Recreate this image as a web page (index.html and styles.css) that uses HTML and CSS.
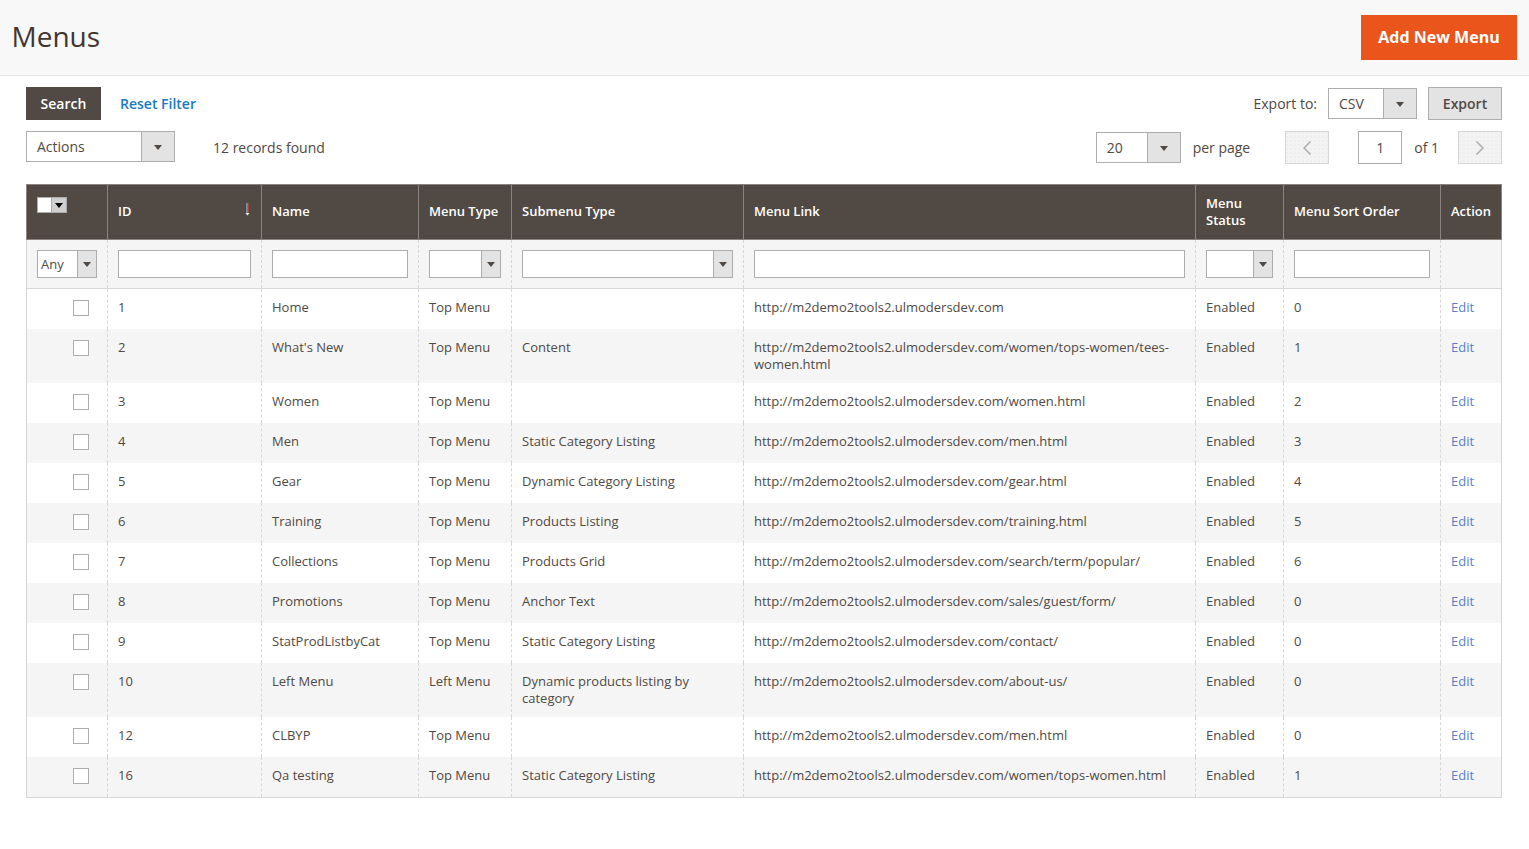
FILE: index.html
```html
<!DOCTYPE html>
<html lang="en">
<head>
<meta charset="utf-8">
<title>Menus</title>
<link rel="stylesheet" href="styles.css">
</head>
<body>
<header class="page-head">
  <h1 class="page-title">Menus</h1>
  <button class="btn-primary">Add New Menu</button>
</header>
<main class="content">
  <div class="bar bar-top">
    <button class="btn-search">Search</button>
    <a class="reset" href="#">Reset Filter</a>
    <span class="spacer"></span>
    <span class="label export-label">Export to:</span>
    <div class="sel sel-csv"><span class="val">CSV</span><span class="arr"><i></i></span></div>
    <button class="btn-export">Export</button>
  </div>
  <div class="bar bar-second">
    <div class="sel sel-actions"><span class="val">Actions</span><span class="arr"><i></i></span></div>
    <span class="label records">12 records found</span>
    <span class="spacer"></span>
    <div class="sel sel-page"><span class="val">20</span><span class="arr"><i></i></span></div>
    <span class="label perpage">per page</span>
    <button class="pager pager-prev" aria-label="Previous"><svg width="10" height="16" viewBox="0 0 10 16"><path d="M8.5 1.5 2 8l6.5 6.5" fill="none" stroke="#adadad" stroke-width="1.5"/></svg></button>
    <input class="page-input" value="1">
    <span class="label of">of 1</span>
    <button class="pager pager-next" aria-label="Next"><svg width="10" height="16" viewBox="0 0 10 16"><path d="M1.5 1.5 8 8l-6.5 6.5" fill="none" stroke="#adadad" stroke-width="1.5"/></svg></button>
  </div>
  <table class="grid">
    <colgroup>
      <col class="c1"><col class="c2"><col class="c3"><col class="c4"><col class="c5"><col class="c6"><col class="c7"><col class="c8"><col class="c9">
    </colgroup>
    <thead>
      <tr class="head">
        <th class="th-check"><span class="mass"><span class="mass-box"></span><span class="mass-arr"><i></i></span></span></th>
        <th class="th-id">ID<svg class="sort" width="7" height="13" viewBox="0 0 7 13"><path d="M3 0v11" stroke="#a9cdf0" stroke-width="1"/><path d="M4 0v11" stroke="#e8483f" stroke-width="1"/><path d="M1.5 10h4L3.5 12.5z" fill="#f4f4f4"/></svg></th>
        <th>Name</th>
        <th>Menu Type</th>
        <th>Submenu Type</th>
        <th>Menu Link</th>
        <th>Menu Status</th>
        <th>Menu Sort Order</th>
        <th>Action</th>
      </tr>
      <tr class="filters">
        <td><div class="sel sel-f sel-any"><span class="val">Any</span><span class="arr"><i></i></span></div></td>
        <td><input class="f-input"></td>
        <td><input class="f-input"></td>
        <td><div class="sel sel-f"><span class="val"></span><span class="arr"><i></i></span></div></td>
        <td><div class="sel sel-f"><span class="val"></span><span class="arr"><i></i></span></div></td>
        <td><input class="f-input"></td>
        <td><div class="sel sel-f"><span class="val"></span><span class="arr"><i></i></span></div></td>
        <td><input class="f-input"></td>
        <td></td>
      </tr>
    </thead>
    <tbody>
      <tr><td class="td-check"><span class="cb"></span></td><td>1</td><td>Home</td><td>Top Menu</td><td></td><td>http://m2demo2tools2.ulmodersdev.com</td><td>Enabled</td><td>0</td><td><a href="#">Edit</a></td></tr>
      <tr><td class="td-check"><span class="cb"></span></td><td>2</td><td>What's New</td><td>Top Menu</td><td>Content</td><td>http://m2demo2tools2.ulmodersdev.com/women/tops-women/tees-women.html</td><td>Enabled</td><td>1</td><td><a href="#">Edit</a></td></tr>
      <tr><td class="td-check"><span class="cb"></span></td><td>3</td><td>Women</td><td>Top Menu</td><td></td><td>http://m2demo2tools2.ulmodersdev.com/women.html</td><td>Enabled</td><td>2</td><td><a href="#">Edit</a></td></tr>
      <tr><td class="td-check"><span class="cb"></span></td><td>4</td><td>Men</td><td>Top Menu</td><td>Static Category Listing</td><td>http://m2demo2tools2.ulmodersdev.com/men.html</td><td>Enabled</td><td>3</td><td><a href="#">Edit</a></td></tr>
      <tr><td class="td-check"><span class="cb"></span></td><td>5</td><td>Gear</td><td>Top Menu</td><td>Dynamic Category Listing</td><td>http://m2demo2tools2.ulmodersdev.com/gear.html</td><td>Enabled</td><td>4</td><td><a href="#">Edit</a></td></tr>
      <tr><td class="td-check"><span class="cb"></span></td><td>6</td><td>Training</td><td>Top Menu</td><td>Products Listing</td><td>http://m2demo2tools2.ulmodersdev.com/training.html</td><td>Enabled</td><td>5</td><td><a href="#">Edit</a></td></tr>
      <tr><td class="td-check"><span class="cb"></span></td><td>7</td><td>Collections</td><td>Top Menu</td><td>Products Grid</td><td>http://m2demo2tools2.ulmodersdev.com/search/term/popular/</td><td>Enabled</td><td>6</td><td><a href="#">Edit</a></td></tr>
      <tr><td class="td-check"><span class="cb"></span></td><td>8</td><td>Promotions</td><td>Top Menu</td><td>Anchor Text</td><td>http://m2demo2tools2.ulmodersdev.com/sales/guest/form/</td><td>Enabled</td><td>0</td><td><a href="#">Edit</a></td></tr>
      <tr><td class="td-check"><span class="cb"></span></td><td>9</td><td>StatProdListbyCat</td><td>Top Menu</td><td>Static Category Listing</td><td>http://m2demo2tools2.ulmodersdev.com/contact/</td><td>Enabled</td><td>0</td><td><a href="#">Edit</a></td></tr>
      <tr><td class="td-check"><span class="cb"></span></td><td>10</td><td>Left Menu</td><td>Left Menu</td><td>Dynamic products listing by category</td><td>http://m2demo2tools2.ulmodersdev.com/about-us/</td><td>Enabled</td><td>0</td><td><a href="#">Edit</a></td></tr>
      <tr><td class="td-check"><span class="cb"></span></td><td>12</td><td>CLBYP</td><td>Top Menu</td><td></td><td>http://m2demo2tools2.ulmodersdev.com/men.html</td><td>Enabled</td><td>0</td><td><a href="#">Edit</a></td></tr>
      <tr><td class="td-check"><span class="cb"></span></td><td>16</td><td>Qa testing</td><td>Top Menu</td><td>Static Category Listing</td><td>http://m2demo2tools2.ulmodersdev.com/women/tops-women.html</td><td>Enabled</td><td>1</td><td><a href="#">Edit</a></td></tr>
    </tbody>
  </table>
</main>
</body>
</html>
```
FILE: styles.css
```css
* { box-sizing: border-box; }
html, body { margin: 0; padding: 0; }
body {
  background: #fff;
  color: #514943;
  font-family: "Open Sans", sans-serif;
  font-size: 14px;
}
button { font-family: inherit; cursor: pointer; }

.page-head {
  height: 76px;
  background: #f8f8f8;
  border-bottom: 1px solid #e3e3e3;
  display: flex;
  align-items: flex-start;
  justify-content: space-between;
  padding: 14px 12px 0 11.5px;
}
.page-title {
  margin: 0;
  font-size: 28px;
  font-weight: 400;
  line-height: 44px;
  color: #41362f;
}
.btn-primary {
  width: 156px;
  height: 45px;
  margin-top: 1px;
  border: 0;
  background: #e9551b;
  color: #fff;
  font-size: 16px;
  font-weight: 700;
  padding: 0 0 1px;
}

.content { padding: 11px 27px 0 26px; }
.bar { display: flex; align-items: center; }
.spacer { flex: 1; }
.bar-top { height: 33px; }
.bar-second { height: 33px; margin-top: 11px; align-items: flex-start; }

.btn-search {
  width: 75px;
  height: 33px;
  border: 0;
  padding: 0;
  background: #514943;
  color: #fff;
  font-size: 14px;
  font-weight: 600;
}
.reset {
  margin-left: 19px;
  color: #1979c3;
  font-size: 14px;
  font-weight: 600;
  text-decoration: none;
}
.label { font-size: 14px; color: #514943; }
.export-label { margin-right: 11px; }
.btn-export {
  width: 74px;
  height: 33px;
  margin-left: 11px;
  padding: 0;
  background: #e3e3e3;
  border: 1px solid #adadad;
  color: #514943;
  font-size: 14px;
  font-weight: 600;
}

.sel {
  display: flex;
  height: 31px;
  background: #fff;
  border: 1px solid #adadad;
  font-size: 14px;
  color: #514943;
}
.sel .val {
  flex: 1;
  min-width: 0;
  padding-left: 10px;
  line-height: 29px;
}
.sel .arr {
  width: 33px;
  background: #e3e3e3;
  border-left: 1px solid #adadad;
  display: flex;
  align-items: center;
  justify-content: center;
}
.sel .arr i, .mass-arr i {
  display: block;
  width: 0;
  height: 0;
  border-left: 4.5px solid transparent;
  border-right: 4.5px solid transparent;
  border-top: 5px solid #514943;
  margin-top: 2px;
}
.sel-csv { width: 89px; }
.sel-actions { width: 149px; }
.sel-page { width: 85px; margin-top: 1px; }
.records { margin-left: 38px; margin-top: 7px; line-height: 19px; }
.perpage { margin-left: 12px; margin-right: 35px; margin-top: 7px; line-height: 19px; }
.pager {
  width: 44px;
  height: 33px;
  padding: 0;
  background-color: #f3f3f3;
  background-image: radial-gradient(circle at 1px 1px, #e6e6e6 0.6px, transparent 0.8px);
  background-size: 4px 4px;
  border: 1px solid #d6d6d6;
  display: flex;
  align-items: center;
  justify-content: center;
}
.page-input {
  width: 44px;
  height: 33px;
  margin-left: 29px;
  border: 1px solid #adadad;
  text-align: center;
  font: 14px "Open Sans", sans-serif;
  color: #514943;
  padding: 0;
}
.of { margin-left: 12px; margin-right: 19px; margin-top: 7px; line-height: 19px; }

.grid {
  width: 1476px;
  margin-top: 20px;
  border-collapse: collapse;
  table-layout: fixed;
  font-size: 13px;
  line-height: 17px;
}
.c1 { width: 81px; }
.c2 { width: 154px; }
.c3 { width: 157px; }
.c4 { width: 93px; }
.c5 { width: 232px; }
.c6 { width: 452px; }
.c7 { width: 88px; }
.c8 { width: 157px; }
.c9 { width: 61px; }

.head th {
  height: 55px;
  padding: 0 10px 1px;
  background: #514943;
  color: #fff;
  border: 1px solid #8a837f;
  font-size: 13px;
  font-weight: 600;
  text-align: left;
  vertical-align: middle;
}
.th-id { position: relative; }
.sort { position: absolute; right: 10px; top: 18px; }
.head .th-check { vertical-align: top; padding-top: 12px; }
.mass {
  display: flex;
  width: 30px;
  height: 16px;
  border: 1px solid #adadad;
  background: #cfcfcf;
}
.mass-box { width: 14px; background: #fff; border-right: 1px solid #adadad; }
.mass-arr { flex: 1; display: flex; align-items: center; justify-content: center; }
.mass-arr i { border-top-color: #000; margin-top: 1px; }

.filters td {
  height: 49px;
  padding: 10px 10px 0;
  background: #f5f5f5;
  border-left: 1px dashed #d6d6d6;
  border-right: 1px dashed #d6d6d6;
  border-bottom: 1px solid #d6d6d6;
  vertical-align: top;
}
.filters td:first-child { border-left: 1px solid #d6d6d6; }
.filters td:last-child { border-right: 1px solid #d6d6d6; }
.f-input {
  display: block;
  width: 100%;
  height: 28px;
  border: 1px solid #adadad;
  background: #fff;
  padding: 0;
}
.sel-f { height: 28px; font-size: 13px; }
.sel-f .val { line-height: 27px; padding-left: 3px; }
.sel-f .arr { width: 19px; }
.sel-f .arr i { border-left-width: 4px; border-right-width: 4px; border-top-width: 5px; margin-top: 0; }

tbody td {
  height: 40px;
  padding: 10px;
  vertical-align: top;
  border-left: 1px dashed #d6d6d6;
  border-right: 1px dashed #d6d6d6;
  color: #514943;
}
tbody td:first-child { border-left: 1px solid #d6d6d6; }
tbody td:last-child { border-right: 1px solid #d6d6d6; }
tbody tr:nth-child(even) td { background: #f5f5f5; }
tbody tr:last-child td { height: 41px; border-bottom: 1px solid #d6d6d6; }
tbody td a { color: #5a7fd0; text-decoration: none; }
tbody td.td-check { padding: 11px 18px 0 0; text-align: right; }
.cb {
  display: inline-block;
  width: 16px;
  height: 16px;
  background: #fff;
  border: 1px solid #adadad;
  vertical-align: top;
}
```
